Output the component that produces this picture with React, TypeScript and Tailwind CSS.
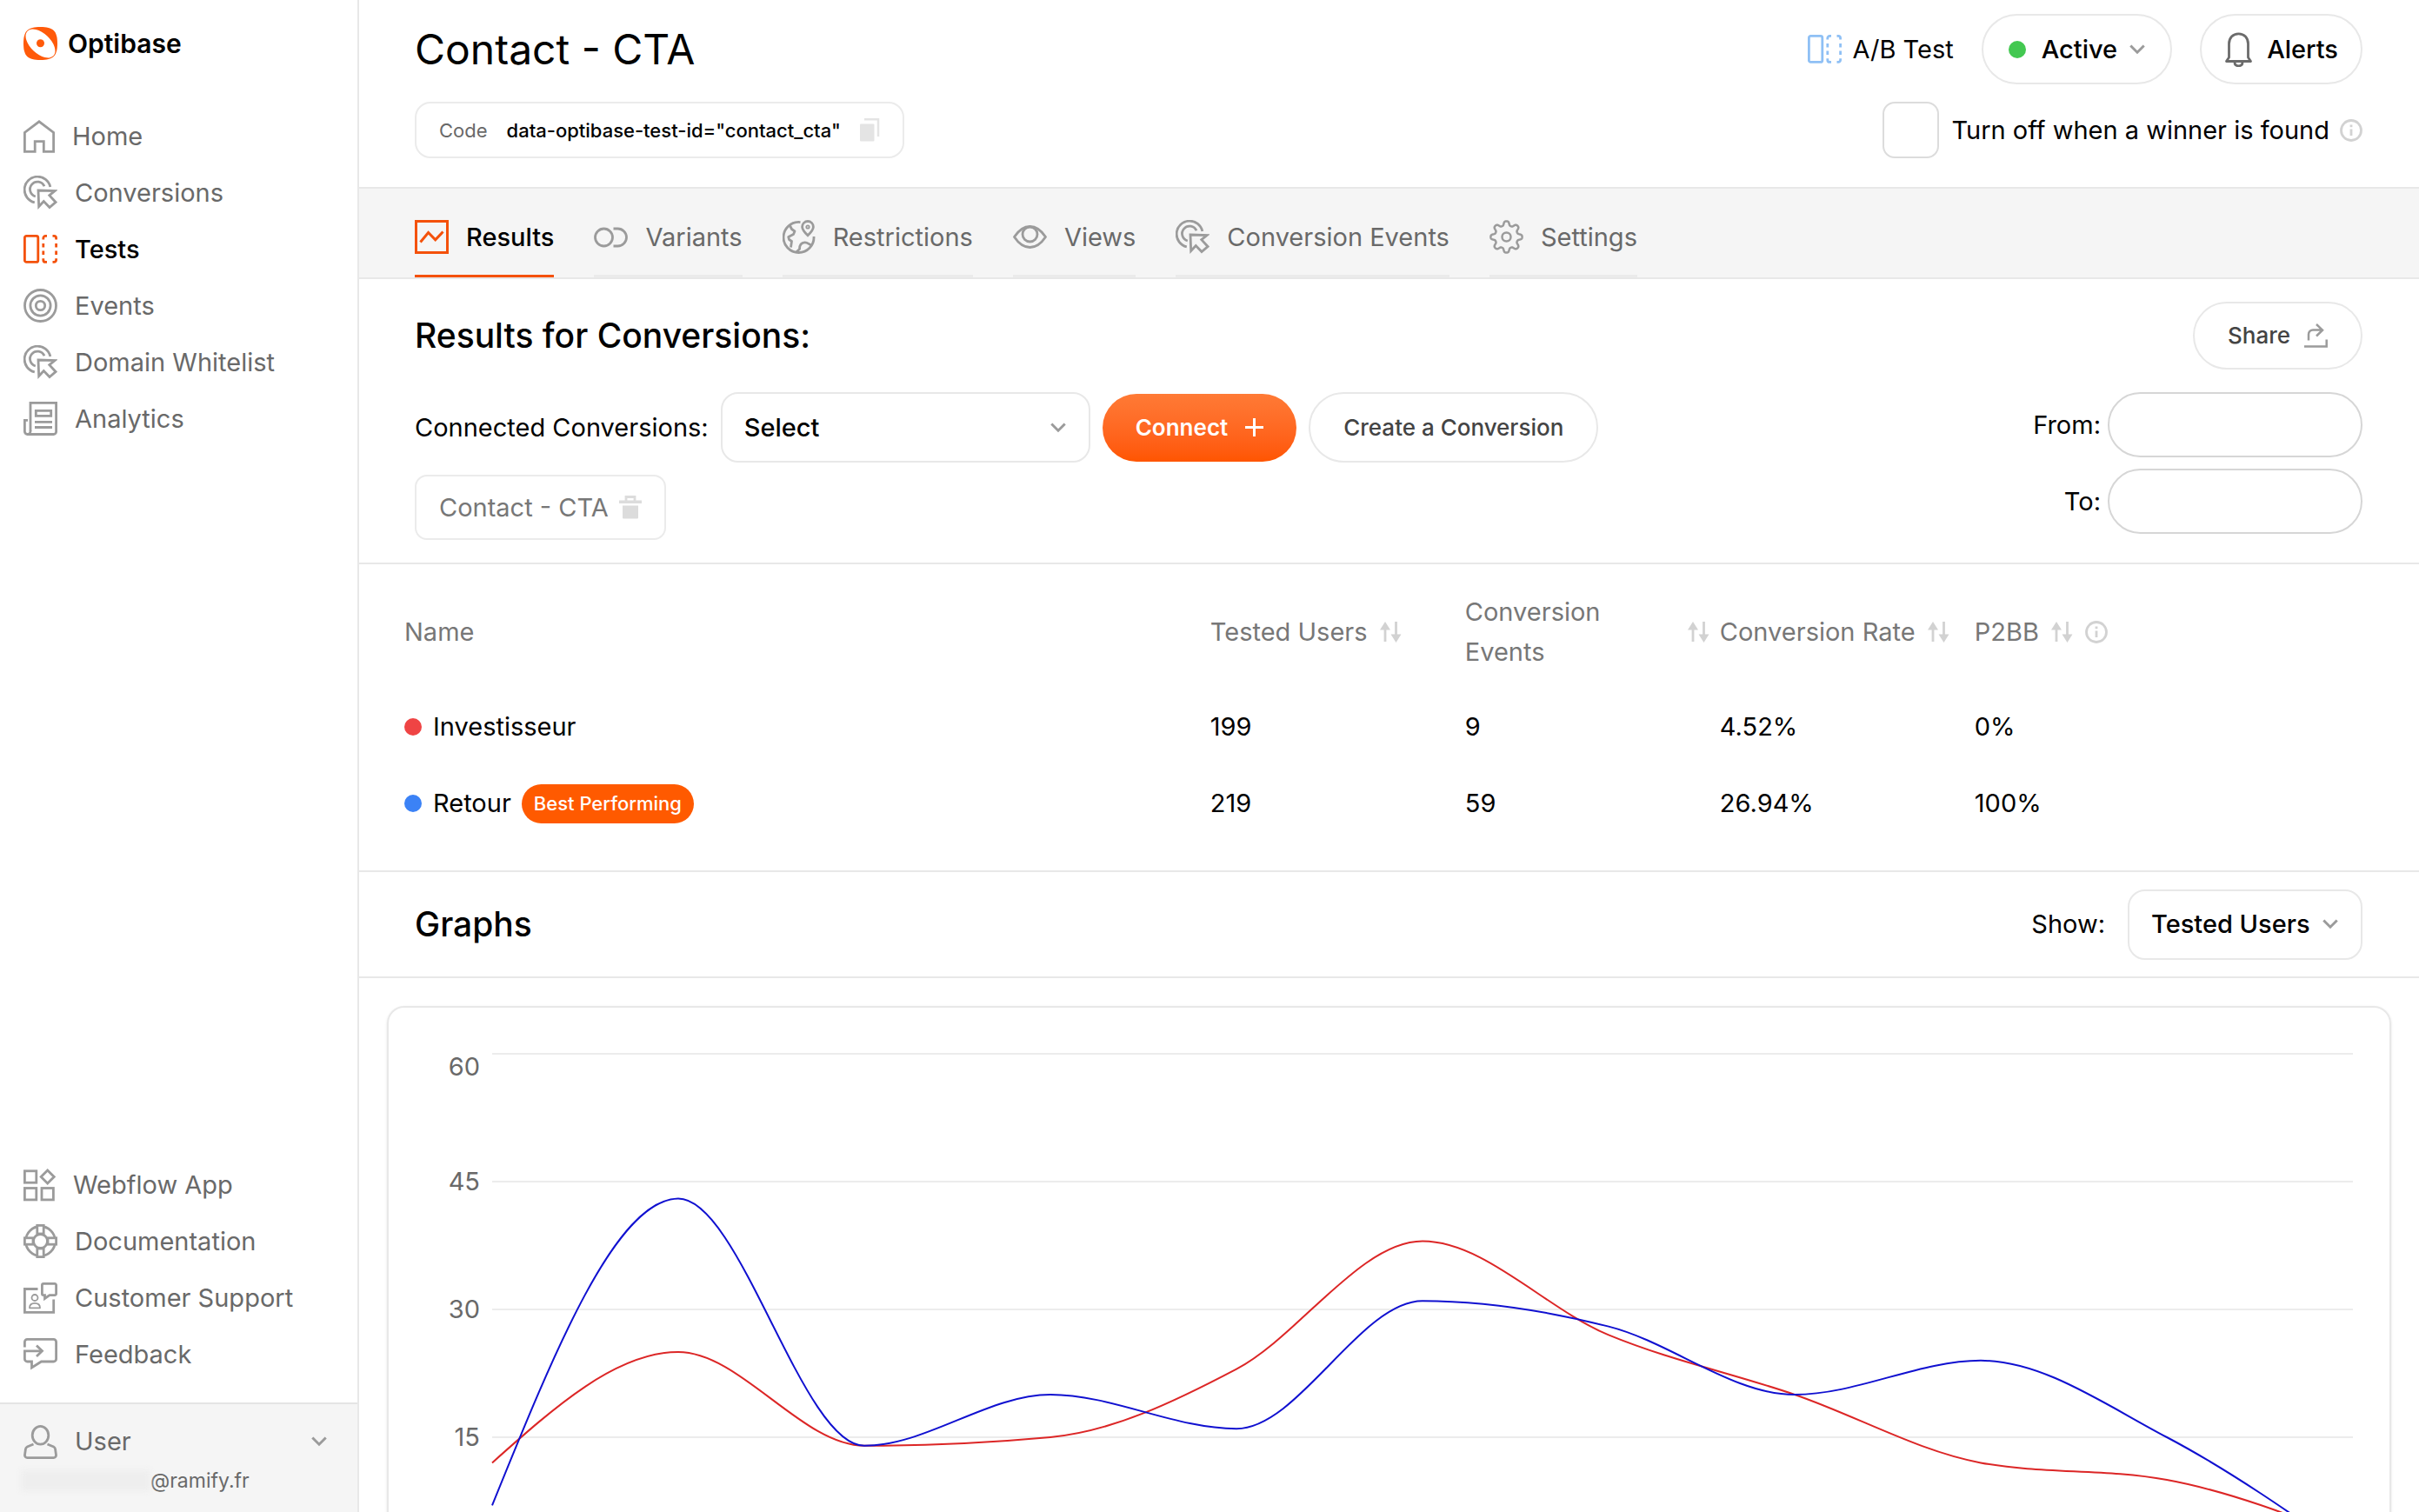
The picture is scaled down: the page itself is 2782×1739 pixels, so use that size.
import * as React from "react";
import { clsx } from "clsx";

/* ---------------- Icons ---------------- */

type IconProps = {
  w: number;
  h: number;
  className?: string;
  strokeWidth?: number;
  children: React.ReactNode;
};

const Icon = ({ w, h, className, strokeWidth = 2.8, children }: IconProps) => (
  <svg
    width={w}
    height={h}
    viewBox={`0 0 ${w} ${h}`}
    fill="none"
    stroke="currentColor"
    strokeWidth={strokeWidth}
    className={clsx("shrink-0", className)}
    aria-hidden="true"
  >
    {children}
  </svg>
);

const LogoIcon = () => (
  <svg width="39" height="38" viewBox="0 0 39 38" className="shrink-0" aria-hidden="true">
    <path d="M19.5 0C34 0 39 4.5 39 19S34 38 19.5 38 0 33.5 0 19 5 0 19.5 0Z" fill="#ff5a0a" />
    <ellipse cx="19.5" cy="19" rx="20.6" ry="11.5" transform="rotate(43 19.5 19)" fill="#fff" />
    <circle cx="19.5" cy="18.8" r="4.5" fill="#ff5a0a" />
  </svg>
);

const HomeIcon = () => (
  <Icon w={36} h={38}>
    <path d="M1.4 36.3V14.5L18 1.8L34.6 14.5V36.3H23.3V24.7H13.2V36.3Z" />
  </Icon>
);

const ClickIcon = () => (
  <Icon w={39} h={39}>
    <path d="M30.8 13A15 15 0 1 0 12.8 30.8" />
    <path d="M24 12.3A8.6 8.6 0 1 0 13.8 24" />
    <path d="M17 17L36 17.6L29.8 22.6L37 30.5L30 36.5L23.3 29.5L17.7 35.5Z" />
  </Icon>
);

const SplitIcon = ({ className }: { className?: string }) => (
  <Icon w={39} h={33} className={className}>
    <rect x="1.4" y="1.4" width="15.4" height="30" rx="2" />
    <path d="M22.8 5.5V3.9a2.5 2.5 0 0 1 2.5-2.5H27M33.5 1.4h1.6a2.5 2.5 0 0 1 2.5 2.5V5.5" />
    <path d="M22.8 27.2v1.7a2.5 2.5 0 0 0 2.5 2.5H27M33.5 31.4h1.6a2.5 2.5 0 0 0 2.5-2.5V27.2" />
    <path d="M22.8 10v4.5M22.8 18.5v4.5M37.6 10v4.5M37.6 18.5v4.5" />
  </Icon>
);

const TargetIcon = () => (
  <Icon w={39} h={39}>
    <circle cx="19.5" cy="19.5" r="18" />
    <circle cx="19.5" cy="19.5" r="11.6" />
    <circle cx="19.5" cy="19.5" r="5.2" />
  </Icon>
);

const NewsIcon = () => (
  <Icon w={39} h={39}>
    <path d="M8 34V1.4H37.6V34.5a3 3 0 0 1-3 3H4.5a3.2 3.2 0 0 1-3.1-3.2V21.3H5" />
    <path d="M8 33.5a3.5 3.5 0 0 1-3.5 4" />
    <path d="M14.3 10.3H31.7V16.3H14.3ZM13 23.3H33M13 29.5H33" />
  </Icon>
);

const AppsIcon = () => (
  <Icon w={37} h={38}>
    <rect x="1.4" y="2.8" width="13.4" height="13.4" />
    <rect x="1.4" y="22.5" width="13.4" height="13.4" />
    <rect x="21" y="22.5" width="13.4" height="13.4" />
    <path d="M27.7 2L35.2 9.5L27.7 17L20.2 9.5Z" />
  </Icon>
);

const LifebuoyIcon = () => (
  <Icon w={39} h={39}>
    <circle cx="19.5" cy="19.5" r="17" />
    <circle cx="19.5" cy="19.5" r="8" />
    <g fill="#fff">
      <rect x="15.8" y="1.4" width="7.4" height="9.6" />
      <rect x="15.8" y="28" width="7.4" height="9.6" />
      <rect x="1.4" y="15.8" width="9.6" height="7.4" />
      <rect x="28" y="15.8" width="9.6" height="7.4" />
    </g>
  </Icon>
);

const SupportIcon = () => (
  <Icon w={39} h={36}>
    <path d="M16.5 7.5H1.4V34.3H34.7V19.5" />
    <path d="M23 1.4H36a1.6 1.6 0 0 1 1.6 1.6V13a1.6 1.6 0 0 1-1.6 1.6H30L24.5 18.5V14.6H23a1.6 1.6 0 0 1-1.6-1.6V3A1.6 1.6 0 0 1 23 1.4Z" />
    <g strokeWidth="1.8">
      <circle cx="13" cy="17.5" r="3.5" />
      <path d="M7 29.3c0-3.5 2.5-5.5 6-5.5s6 2 6 5.5Z" strokeLinejoin="round" />
    </g>
  </Icon>
);

const FeedbackIcon = () => (
  <Icon w={39} h={37}>
    <path d="M1.4 10.5V4.4a3 3 0 0 1 3-3H34.6a3 3 0 0 1 3 3V24a3 3 0 0 1-3 3H20.5L9.5 34V27H4.4a3 3 0 0 1-3-3V14.8H21" />
    <path d="M15 8.5L21.5 14.8L15 21" />
  </Icon>
);

const UserIcon = () => (
  <Icon w={39} h={39}>
    <ellipse cx="19.5" cy="11.8" rx="9.3" ry="10.4" />
    <path d="M11.5 22L4.3 25C3 25.6 2.5 26.5 2.4 28L1.5 34.3A3 3 0 0 0 4.4 37.6H34.6A3 3 0 0 0 37.5 34.3L36.6 28C36.5 26.5 36 25.6 34.7 25L27.5 22" />
  </Icon>
);

const ChartIcon = () => (
  <Icon w={39} h={39} strokeWidth={3}>
    <rect x="1.5" y="1.5" width="36" height="36" />
    <path d="M6.5 25.5L15.6 14.5L23.7 22.8L32.5 13.5" />
  </Icon>
);

const VariantsIcon = () => (
  <Icon w={39} h={24}>
    <circle cx="11.5" cy="12" r="10" />
    <path d="M22.5 2H27.5a10 10 0 0 1 0 20H22.5" />
  </Icon>
);

const GlobeIcon = () => (
  <Icon w={38} h={40}>
    <path d="M20.5 2.6A17.5 17.5 0 1 0 36 19" />
    <path d="M29 17.8C25 13.8 22.6 11 22.6 7.9a6.4 6.4 0 0 1 12.8 0C35.4 11 33 13.8 29 17.8Z" />
    <circle cx="29" cy="8" r="1.7" strokeWidth="1.8" />
    <path
      d="M8.5 6.5L10.5 10.5L14 13L12.5 16.5L6.7 19.5L7.5 22.5L10.5 24.5L9.5 31.5"
      strokeLinejoin="round"
    />
    <path d="M15.5 37.2L19.5 33.5C19.5 29 21 26 25.5 25.8C29.5 25.6 30 28.5 34 29" />
  </Icon>
);

const EyeIcon = () => (
  <Icon w={39} h={27}>
    <path
      d="M1.5 13.5C6.5 6 12 1.5 19.5 1.5S32.5 6 37.5 13.5C32.5 21 27 25.5 19.5 25.5S6.5 21 1.5 13.5Z"
      strokeLinejoin="round"
    />
    <circle cx="19.5" cy="10.5" r="8.5" />
  </Icon>
);

const gearPath = (() => {
  const steps = 160;
  const pts: string[] = [];
  for (let i = 0; i < steps; i++) {
    const a = (i / steps) * Math.PI * 2;
    const r = 15.7 + 2.6 * Math.tanh(1.6 * Math.cos(8 * a));
    pts.push(`${(19.5 + r * Math.cos(a)).toFixed(2)} ${(19.5 + r * Math.sin(a)).toFixed(2)}`);
  }
  return `M${pts.join("L")}Z`;
})();

const GearIcon = () => (
  <Icon w={39} h={39} strokeWidth={2.5}>
    <path d={gearPath} strokeLinejoin="round" />
    <circle cx="19.5" cy="19.5" r="5" />
  </Icon>
);

const BellIcon = () => (
  <Icon w={33} h={40} className="text-[#6b6b6b]">
    <path
      d="M5.5 29V13.5C5.5 6.5 10 1.8 16.5 1.8S27.5 6.5 27.5 13.5V29L30.5 33.5H2.5Z"
      strokeLinejoin="round"
    />
    <path d="M12 34.5c0 3 2 4.3 4.5 4.3s4.5-1.3 4.5-4.3" />
  </Icon>
);

const ShareIcon = () => (
  <Icon w={27} h={28} strokeWidth={2.5} className="text-[#9b9b9b]">
    <path d="M0 26.5H25.7V18.5M5 19.5V12.5a5 5 0 0 1 5-5H21M14 1L21 7.7L14 14.5" />
  </Icon>
);

const PlusIcon = () => (
  <Icon w={21} h={21} strokeWidth={3}>
    <path d="M10.5 0V21M0 10.5H21" />
  </Icon>
);

const ChevronIcon = ({ className }: { className?: string }) => (
  <Icon w={18} h={12} strokeWidth={3} className={clsx("text-[#9b9b9b]", className)}>
    <path d="M1.3 1.5L9 9.2L16.7 1.5" />
  </Icon>
);

const CopyIcon = () => (
  <Icon w={23} h={27} strokeWidth={2.5} className="text-[#e4e4e4]">
    <rect x="0" y="6.5" width="16.5" height="20" rx="1" fill="currentColor" stroke="none" />
    <path d="M5 1.3H21V21" />
  </Icon>
);

const TrashIcon = () => (
  <Icon w={26} h={27} className="text-[#dcdcdc]">
    <path d="M8 7V1.5H18V7" />
    <rect x="0" y="5.5" width="26" height="3.5" fill="currentColor" stroke="none" />
    <path d="M4 11.5H22V25.5a1 1 0 0 1-1 1H5a1 1 0 0 1-1-1Z" fill="currentColor" stroke="none" />
  </Icon>
);

const SortIcon = () => (
  <Icon w={25} h={24} className="text-[#d2d2d2]">
    <path d="M6 8V23M18.5 0V16" />
    <path d="M6 0L12 9.5H0ZM18.5 24L12.5 14.5H24.5Z" fill="currentColor" stroke="none" />
  </Icon>
);

const InfoIcon = () => (
  <Icon w={26} h={26} className="text-[#d2d2d2]">
    <circle cx="13" cy="13" r="11.5" />
    <path d="M13 11.5V19M13 6.5V9.3" />
  </Icon>
);

/* ---------------- Sidebar ---------------- */

type NavLink = { label: string; icon: React.ReactNode; active?: boolean };

const mainLinks: NavLink[] = [
  { label: "Home", icon: <HomeIcon /> },
  { label: "Conversions", icon: <ClickIcon /> },
  { label: "Tests", icon: <SplitIcon className="text-[#f4510b]" />, active: true },
  { label: "Events", icon: <TargetIcon /> },
  { label: "Domain Whitelist", icon: <ClickIcon /> },
  { label: "Analytics", icon: <NewsIcon /> },
];

const helpLinks: NavLink[] = [
  { label: "Webflow App", icon: <AppsIcon /> },
  { label: "Documentation", icon: <LifebuoyIcon /> },
  { label: "Customer Support", icon: <SupportIcon /> },
  { label: "Feedback", icon: <FeedbackIcon /> },
];

const NavList = ({ links }: { links: NavLink[] }) => (
  <ul>
    {links.map((link) => (
      <li key={link.label}>
        <a href="#" className="flex h-[65px] items-center gap-5 text-[#9b9b9b]">
          {link.icon}
          <span className={link.active ? "font-medium text-black" : "text-[#696969]"}>
            {link.label}
          </span>
        </a>
      </li>
    ))}
  </ul>
);

const Sidebar = () => (
  <aside className="flex w-[413px] shrink-0 flex-col border-r-2 border-[#e8e8e8]">
    <a href="#" className="flex items-center gap-3 px-[27px] pt-[27px] text-[30px] font-semibold">
      <LogoIcon />
      Optibase
    </a>
    <nav className="mt-[51px] px-[27px]" aria-label="Main">
      <NavList links={mainLinks} />
    </nav>
    <nav className="mt-auto mb-[23px] px-[27px]" aria-label="Help">
      <NavList links={helpLinks} />
    </nav>
    <div className="h-[126px] border-t-2 border-[#e4e4e4] bg-[#f5f5f5] text-[#696969]">
      <button type="button" className="flex w-full items-center gap-5 px-[27px] pt-5">
        <span className="text-[#9b9b9b]">
          <UserIcon />
        </span>
        User
        <ChevronIcon className="mr-2 ml-auto" />
      </button>
      <div className="flex items-center pl-6 text-[23px] leading-[44px]">
        <span className="h-6 w-[149px] bg-[#eeeeee] blur-[3px]" />
        @ramify.fr
      </div>
    </div>
  </aside>
);

/* ---------------- Header ---------------- */

const Header = () => (
  <header className="flex justify-between border-b-2 border-[#e8e8e8] pt-4 pr-[65px] pb-[33px] pl-16">
    <div className="flex flex-col items-start gap-5">
      <h1 className="text-[48px] leading-[81px]">Contact - CTA</h1>
      <div className="flex h-[65px] items-center gap-[22px] rounded-[18px] border-2 border-[#ebebeb] px-[26px] text-[22px]">
        <span className="text-[#696969]">Code</span>
        <code className="font-['Inter',sans-serif] font-medium">
          data-optibase-test-id="contact_cta"
        </code>
        <button type="button" aria-label="Copy code">
          <CopyIcon />
        </button>
      </div>
    </div>
    <div className="flex flex-col items-end gap-5">
      <div className="flex items-center">
        <SplitIcon className="text-[#8fc0f5]" />
        <span className="ml-3">A/B Test</span>
        <button
          type="button"
          className="ml-8 flex h-[81px] items-center rounded-full border-2 border-[#e8e8e8] px-[29px] font-medium"
        >
          <span className="mr-[18px] size-5 rounded-full bg-[#43c851]" />
          Active
          <ChevronIcon className="ml-[14px]" />
        </button>
        <button
          type="button"
          className="ml-8 flex h-[81px] items-center gap-4 rounded-full border-2 border-[#e8e8e8] px-[26px] font-medium"
        >
          <BellIcon />
          Alerts
        </button>
      </div>
      <div className="flex items-center">
        <input
          id="turn-off"
          type="checkbox"
          className="size-[65px] appearance-none rounded-[14px] border-2 border-[#dcdcdc] bg-white checked:bg-[#ff5a0a]"
        />
        <label htmlFor="turn-off" className="ml-[14px]">
          Turn off when a winner is found
        </label>
        <button type="button" aria-label="More information" className="ml-3">
          <InfoIcon />
        </button>
      </div>
    </div>
  </header>
);

/* ---------------- Tabs ---------------- */

const tabs: NavLink[] = [
  { label: "Results", icon: <ChartIcon />, active: true },
  { label: "Variants", icon: <VariantsIcon /> },
  { label: "Restrictions", icon: <GlobeIcon /> },
  { label: "Views", icon: <EyeIcon /> },
  { label: "Conversion Events", icon: <ClickIcon /> },
  { label: "Settings", icon: <GearIcon /> },
];

const TabBar = () => (
  <nav
    aria-label="Test sections"
    className="flex h-[104px] gap-[46px] border-b-2 border-[#e8e8e8] bg-[#f5f5f5] px-16"
  >
    {tabs.map((tab) => (
      <a
        key={tab.label}
        href="#"
        className={clsx(
          "flex items-center gap-5 border-b-3 pt-3",
          tab.active
            ? "border-[#f4510b] font-medium text-[#f4510b]"
            : "border-[#ebebeb] text-[#9b9b9b]"
        )}
      >
        {tab.icon}
        <span className={tab.active ? "text-black" : "text-[#696969]"}>{tab.label}</span>
      </a>
    ))}
  </nav>
);

/* ---------------- Results ---------------- */

const Select = ({ className, children, ...props }: React.ComponentProps<"select">) => (
  <div className="relative">
    <select
      className={clsx(
        "h-[81px] appearance-none rounded-[20px] border-2 border-[#e8e8e8] bg-white px-[25px] font-medium",
        className
      )}
      {...props}
    >
      {children}
    </select>
    <ChevronIcon className="pointer-events-none absolute top-1/2 right-7 -translate-y-1/2" />
  </div>
);

const DateField = ({ id, label }: { id: string; label: string }) => (
  <div className="flex items-center gap-2">
    <label htmlFor={id}>{label}</label>
    <input
      id={id}
      type="text"
      className="h-[75px] w-[293px] rounded-full border-2 border-[#d6d6d6] px-7"
    />
  </div>
);

const ResultsFilters = () => (
  <section className="border-b-2 border-[#e8e8e8] pt-[26px] pr-[65px] pb-[26px] pl-16">
    <div className="flex items-center justify-between">
      <h2 className="text-[39px] font-medium">Results for Conversions:</h2>
      <button
        type="button"
        className="flex h-[78px] items-center gap-4 rounded-full border-2 border-[#e8e8e8] px-[38px] text-[26px] font-medium text-[#444]"
      >
        Share
        <ShareIcon />
      </button>
    </div>
    <div className="mt-[26px] flex items-start justify-between">
      <div>
        <div className="flex items-center gap-[14px]">
          <label htmlFor="conversions">Connected Conversions:</label>
          <Select id="conversions" className="w-[425px]">
            <option>Select</option>
          </Select>
          <button
            type="button"
            className="flex h-[78px] items-center gap-5 rounded-full bg-linear-to-b from-[#ff7a35] to-[#ff5500] px-[38px] text-[26px] font-semibold text-white"
          >
            Connect
            <PlusIcon />
          </button>
          <button
            type="button"
            className="h-[81px] rounded-full border-2 border-[#e8e8e8] px-[38px] text-[26px] font-medium text-[#444]"
          >
            Create a Conversion
          </button>
        </div>
        <div className="mt-[14px] flex h-[75px] w-fit items-center gap-3 rounded-[14px] border-2 border-[#ebebeb] px-[26px] text-[#777]">
          Contact - CTA
          <button type="button" aria-label="Remove conversion">
            <TrashIcon />
          </button>
        </div>
      </div>
      <div className="flex flex-col items-end gap-[13px]">
        <DateField id="from" label="From:" />
        <DateField id="to" label="To:" />
      </div>
    </div>
  </section>
);

const columns = [
  { label: "Name" },
  { label: "Tested Users", sortable: true },
  { label: "Conversion Events", sortable: true },
  { label: "Conversion Rate", sortable: true },
  { label: "P2BB", sortable: true, info: true },
];

const variants = [
  { name: "Investisseur", dot: "bg-[#ef4444]", users: 199, events: 9, rate: "4.52%", p2bb: "0%" },
  {
    name: "Retour",
    dot: "bg-[#3b82f6]",
    users: 219,
    events: 59,
    rate: "26.94%",
    p2bb: "100%",
    best: true,
  },
];

const ResultsTable = () => (
  <section className="border-b-2 border-[#e8e8e8] pt-[13px] pb-[33px] pl-[52px]">
    <table className="w-full table-fixed text-left">
      <colgroup>
        <col className="w-[40%]" />
        <col className="w-[293px]" />
        <col className="w-[293px]" />
        <col className="w-[293px]" />
        <col />
      </colgroup>
      <thead>
        <tr className="h-[130px]">
          {columns.map((col) => (
            <th key={col.label} scope="col" className="pr-3 font-normal text-[#777]">
              <div className="flex items-center gap-[14px] leading-[46px]">
                {col.label}
                {col.sortable && (
                  <button type="button" aria-label={`Sort by ${col.label}`}>
                    <SortIcon />
                  </button>
                )}
                {col.info && <InfoIcon />}
              </div>
            </th>
          ))}
        </tr>
      </thead>
      <tbody>
        {variants.map((row) => (
          <tr key={row.name} className="h-[88px]">
            <td>
              <div className="flex items-center">
                <span className={clsx("mr-[13px] size-5 rounded-full", row.dot)} />
                {row.name}
                {row.best && (
                  <span className="ml-3 rounded-full bg-[#ff5a00] px-[14px] text-[22px] leading-[45px] font-medium text-white">
                    Best Performing
                  </span>
                )}
              </div>
            </td>
            <td>{row.users}</td>
            <td>{row.events}</td>
            <td>{row.rate}</td>
            <td>{row.p2bb}</td>
          </tr>
        ))}
      </tbody>
    </table>
  </section>
);

/* ---------------- Graph ---------------- */

const MAX = 60;
const ticks = [60, 45, 30, 15];

const series = [
  { color: "#dc2626", values: [12, 25, 14, 15, 23, 38, 27, 20, 12, 10, 3] },
  { color: "#1010d0", values: [7, 43, 14, 20, 16, 31, 28, 20, 24, 15, 1] },
];

// monotone cubic through evenly spaced points, in a 1000 x 588 box
const curve = (values: number[]) => {
  const step = 1000 / (values.length - 1);
  const ys = values.map((v) => ((MAX - v) / MAX) * 588);
  const slopes = ys.slice(1).map((y, i) => y - ys[i]);
  const last = ys.length - 1;
  const tangents = ys.map((_, i) => {
    if (i === 0 || i === last) return 0;
    const a = slopes[i - 1];
    const b = slopes[i];
    if (a * b <= 0) return 0;
    return Math.sign(a) * Math.min(Math.abs(a), Math.abs(b), Math.abs(a + b) / 4) * 2;
  });
  // open ends: the neighbouring tangent decides the slope
  tangents[0] = (3 * slopes[0] - tangents[1]) / 2;
  tangents[last] = (3 * slopes[last - 1] - tangents[last - 1]) / 2;

  let d = `M0 ${ys[0]}`;
  for (let i = 1; i < ys.length; i++) {
    const x = i * step;
    d += `C${x - (step * 2) / 3} ${ys[i - 1] + tangents[i - 1] / 3} ${x - step / 3} ${
      ys[i] - tangents[i] / 3
    } ${x} ${ys[i]}`;
  }
  return d;
};

const Graph = () => (
  <div className="mx-8 mt-8 flex rounded-[20px] border-2 border-[#e8e8e8] pt-[53px] pr-[42px] pb-16 pl-8 shadow-sm">
    <div className="flex w-[73px] flex-col text-right text-[#696969]">
      {ticks.map((tick, i) => (
        <span
          key={tick}
          className={
            i === 0 ? "h-[73px] leading-[30px]" : "flex h-[147px] items-center justify-end"
          }
        >
          {tick}
        </span>
      ))}
    </div>
    <svg
      viewBox="0 0 1000 588"
      preserveAspectRatio="none"
      className="ml-[14px] h-[588px] min-w-0 flex-1 overflow-visible"
      fill="none"
      role="img"
      aria-label="Tested users over time"
    >
      {[...ticks, 0].map((tick) => (
        <path
          key={tick}
          d={`M0 ${((MAX - tick) / MAX) * 588}H1000`}
          stroke="#ececec"
          strokeWidth="2"
          vectorEffect="non-scaling-stroke"
        />
      ))}
      {series.map((s) => (
        <path
          key={s.color}
          d={curve(s.values)}
          stroke={s.color}
          strokeWidth="2"
          vectorEffect="non-scaling-stroke"
        />
      ))}
    </svg>
  </div>
);

const Graphs = () => (
  <section>
    <div className="flex h-[122px] items-center justify-between border-b-2 border-[#e8e8e8] pr-[65px] pl-16">
      <h2 className="text-[39px] font-medium">Graphs</h2>
      <div className="flex items-center gap-[26px]">
        <label htmlFor="metric">Show:</label>
        <Select id="metric" className="w-[270px]">
          <option>Tested Users</option>
        </Select>
      </div>
    </div>
    <Graph />
  </section>
);

/* ---------------- Page ---------------- */

export default function App() {
  return (
    <div className="flex h-screen overflow-hidden bg-white font-['Inter',sans-serif] text-[29px] leading-[46px] text-black">
      <Sidebar />
      <main className="min-w-0 flex-1 overflow-y-auto [scrollbar-width:none]">
        <Header />
        <TabBar />
        <ResultsFilters />
        <ResultsTable />
        <Graphs />
      </main>
    </div>
  );
}
